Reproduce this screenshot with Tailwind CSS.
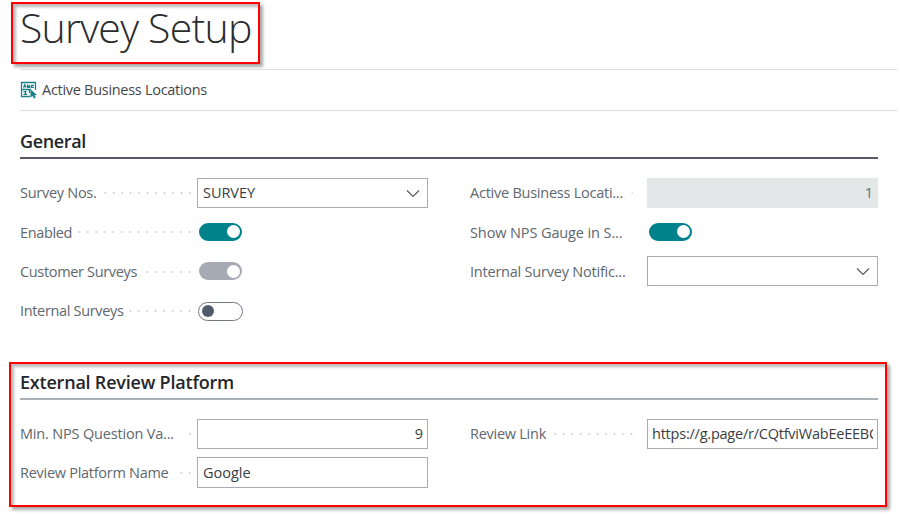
<!DOCTYPE html>
<html lang="en">
<head>
<meta charset="utf-8">
<title>Survey Setup</title>
<script src="https://cdn.jsdelivr.net/npm/@tailwindcss/browser@4"></script>
</head>
<body class="bg-white w-[900px] h-[531px] overflow-hidden whitespace-nowrap font-['Open_Sans','Noto_Sans',sans-serif] text-[14.5px] text-[#60676e]">
<header class="h-[69px] pt-[2px] pl-[11px]">
  <h1 class="w-[249px] h-[62px] border-2 border-[#fe0000] shadow-[3px_3px_3px_#00000055,inset_3px_3px_3px_#00000044] pl-[7px] text-[41px] leading-[46px] font-light text-[#2a2c2e] tracking-[-0.75px]">Survey Setup</h1>
</header>
<nav class="ml-5 w-[877px] h-[42px] border-y border-[#dedede] flex items-center gap-[4px] text-[#44484c]">
  <svg class="w-[18px] h-[18px]" viewBox="0 0 18 18" fill="none" stroke="#17808a">
    <path d="M10 15.500H1.500V1.500H15.500V9M1 8.500H11M9.500 8V12" stroke-width="1.300"/>
    <path d="M3.500 6.500L4.800 3.800L6.200 6.500M4 5.700H6M7.700 3.500V6.400H9.700V5H7.700M13.800 4.300H11.600V6.300H13.800M3.500 10.700H6.500M3.500 13.300H7M5.500 10.700V13.300" stroke-width="1.300"/>
    <path d="M10.500 8.200L17 14L14.500 14.300L15.800 16.800L13.900 17.600L12.700 15L10.500 16.500Z" fill="#17808a" stroke="none"/>
  </svg>
  <span class="tracking-[-0.288px]">Active Business Locations</span>
</nav>
<main>
  <section class="pl-5 pt-[17px] h-[251px]">
    <h2 class="w-[858px] h-[31px] border-b-2 border-[#555a6b] text-[18px] leading-[27px] font-semibold text-[#24262a] tracking-[-0.353px]">General</h2>
    <div class="mt-[14.500px] flex gap-[42px]">
      <div class="w-[408px]">
        <div class="h-[39.300px] flex items-center">
          <div class="w-[177px] pr-[3px] flex items-center justify-between"><span class="tracking-[-0.277px]">Survey Nos.</span><i class="w-[93.200px] h-2 bg-[radial-gradient(circle,#c9ccd0_0.7px,transparent_1.2px)] bg-[length:8.470px_8px] bg-right"></i></div>
          <div class="w-[231px] h-[30px] border border-[#a9abb5] flex items-center justify-between pl-[5px] pr-[7px] text-[#3a3d42]"><span class="tracking-[-0.047px]">SURVEY</span><svg class="w-[14px] h-[9px]" viewBox="0 0 14 9" fill="none" stroke="#54585c" stroke-width="1.100"><path d="M1 1.500L7 7.500L13 1.500"/></svg></div>
        </div>
        <div class="h-[39.300px] flex items-center">
          <div class="w-[177px] pr-[3px] flex items-center justify-between"><span class="tracking-[-0.366px]">Enabled</span><i class="w-[118.600px] h-2 bg-[radial-gradient(circle,#c9ccd0_0.7px,transparent_1.2px)] bg-[length:8.470px_8px] bg-right"></i></div>
          <div class="ml-[2px] w-[43px] h-[18px] -mt-px rounded-full bg-[#00828c] flex items-center justify-end pr-[2px]"><b class="size-[13px] rounded-full bg-white"></b></div>
        </div>
        <div class="h-[39.300px] flex items-center">
          <div class="w-[177px] pr-[3px] flex items-center justify-between"><span class="tracking-[-0.339px]">Customer Surveys</span><i class="w-[50.800px] h-2 bg-[radial-gradient(circle,#c9ccd0_0.7px,transparent_1.2px)] bg-[length:8.470px_8px] bg-right"></i></div>
          <div class="ml-[2px] w-[43px] h-[18px] -mt-px rounded-full bg-[#a6aab5] flex items-center justify-end pr-[2px]"><b class="size-[13px] rounded-full bg-white"></b></div>
        </div>
        <div class="h-[39.300px] flex items-center">
          <div class="w-[177px] pr-[3px] flex items-center justify-between"><span class="tracking-[-0.337px]">Internal Surveys</span><i class="w-[67.800px] h-2 bg-[radial-gradient(circle,#c9ccd0_0.7px,transparent_1.2px)] bg-[length:8.470px_8px] bg-right"></i></div>
          <div class="ml-px w-[45px] h-[19px] rounded-full border border-[#747883] flex items-center pl-[3px]"><b class="size-[12px] rounded-full bg-[#505c6d]"></b></div>
        </div>
      </div>
      <div class="w-[408px]">
        <div class="h-[39.300px] flex items-center">
          <div class="w-[177px] pr-[11px] flex items-center justify-between"><span class="tracking-[-0.244px]">Active Business Locati...</span><i class="w-[8.470px] h-2 bg-[radial-gradient(circle,#e4e6e8_0.7px,transparent_1.2px)] bg-[length:8.470px_8px] bg-right"></i></div>
          <div class="w-[231px] h-[30px] bg-[#e4e6e8] flex items-center justify-end pr-[5px] text-[#3c7d86]">1</div>
        </div>
        <div class="h-[39.300px] flex items-center">
          <div class="w-[177px]"><span class="tracking-[-0.109px]">Show NPS Gauge in S...</span></div>
          <div class="ml-[2px] w-[43px] h-[18px] -mt-px rounded-full bg-[#00828c] flex items-center justify-end pr-[2px]"><b class="size-[13px] rounded-full bg-white"></b></div>
        </div>
        <div class="h-[39.300px] flex items-center">
          <div class="w-[177px]"><span class="tracking-[-0.216px]">Internal Survey Notific...</span></div>
          <div class="w-[231px] h-[30px] -mt-px border border-[#a9abb5] flex items-center justify-end pr-[7px]"><svg class="w-[14px] h-[9px]" viewBox="0 0 14 9" fill="none" stroke="#54585c" stroke-width="1.100"><path d="M1 1.500L7 7.500L13 1.500"/></svg></div>
        </div>
      </div>
    </div>
  </section>
  <section class="ml-[9px] w-[878px] h-[145px] border-2 border-[#fe0000] shadow-[3px_3px_3px_#00000055,inset_3px_3px_3px_#00000044] pl-[9px] pt-[4px]">
    <h2 class="w-[858px] h-[32px] border-b-2 border-[#a9b0b8] text-[18px] leading-[28px] font-semibold text-[#24262a] tracking-[-0.213px]">External Review Platform</h2>
    <div class="mt-[14px] flex gap-[42px]">
      <div class="w-[408px]">
        <div class="h-[39.300px] flex items-center">
          <div class="w-[177px] pr-[3px] flex items-center justify-between"><span class="tracking-[-0.178px]">Min. NPS Question Va...</span><i class="w-[8.470px] h-2 bg-[radial-gradient(circle,#c9ccd0_0.7px,transparent_1.2px)] bg-[length:8.470px_8px] bg-right"></i></div>
          <div class="w-[231px] h-[30px] border border-[#a9abb5] flex items-center justify-end pr-[4px] text-[#3a3d42]">9</div>
        </div>
        <div class="h-[39.300px] flex items-center">
          <div class="w-[177px] pr-[3px] flex items-center justify-between"><span class="tracking-[-0.276px]">Review Platform Name</span><i class="w-[17px] h-2 bg-[radial-gradient(circle,#c9ccd0_0.7px,transparent_1.2px)] bg-[length:8.470px_8px] bg-right"></i></div>
          <div class="w-[231px] h-[31px] border border-[#a9abb5] flex items-center pl-[5px] text-[#3a3d42]"><span>Google</span></div>
        </div>
      </div>
      <div class="w-[408px]">
        <div class="h-[39.300px] flex items-center">
          <div class="w-[177px] pr-[11px] flex items-center justify-between"><span class="tracking-[-0.263px]">Review Link</span><i class="w-[84.700px] h-2 bg-[radial-gradient(circle,#c9ccd0_0.7px,transparent_1.2px)] bg-[length:8.470px_8px] bg-right"></i></div>
          <div class="w-[231px] h-[30px] border border-[#a9abb5] flex items-center px-[4px] text-[#3a3d42]"><div class="w-[221px] overflow-hidden tracking-[-0.226px]">https://g.page/r/CQtfviWabEeEEBC</div></div>
        </div>
      </div>
    </div>
  </section>
</main>
</body>
</html>
